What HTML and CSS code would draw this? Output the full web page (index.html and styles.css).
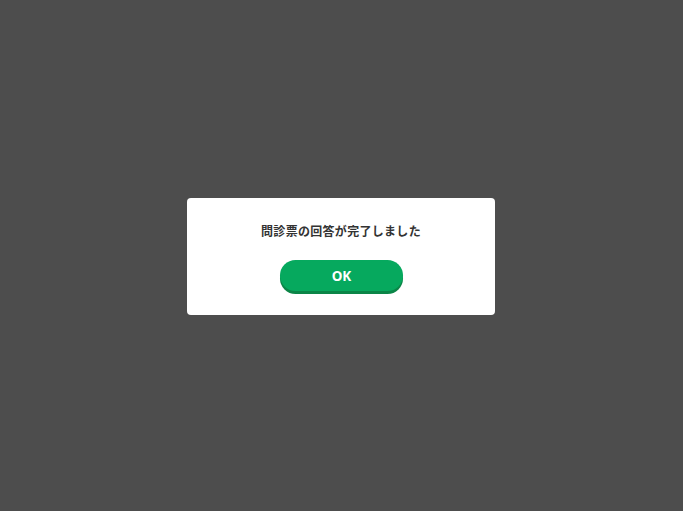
FILE: index.html
```html
<!DOCTYPE html>
<html lang="ja">
<head>
<meta charset="utf-8">
<link rel="stylesheet" href="styles.css">
</head>
<body>
<div class="overlay">
  <div class="dialog">
    <p class="message">問診票の回答が完了しました</p>
    <button class="ok-btn">OK</button>
  </div>
</div>
</body>
</html>
```
FILE: styles.css
```css
html, body {
  margin: 0;
  padding: 0;
  height: 100%;
}
body {
  background: #4d4d4d;
  font-family: "Noto Sans CJK JP", "Noto Sans", sans-serif;
}
.overlay {
  height: 100%;
  display: flex;
  align-items: center;
  justify-content: center;
}
.dialog {
  width: 308px;
  height: 117px;
  box-sizing: border-box;
  background: #ffffff;
  border-radius: 4px;
  display: flex;
  flex-direction: column;
  align-items: center;
  padding-top: 24px;
  margin-top: 2px;
  margin-right: 1px;
}
.message {
  margin: 0;
  font-size: 12px;
  line-height: 18px;
  font-weight: 700;
  color: #333333;
  letter-spacing: 0.3px;
}
.ok-btn {
  margin-top: 20px;
  width: 123px;
  height: 31px;
  border: none;
  border-radius: 16px;
  background: #06a95e;
  box-shadow: 0 3px 0 #0b8547;
  color: #ffffff;
  font-family: "Noto Sans", "Noto Sans CJK JP", sans-serif;
  font-weight: 700;
  font-size: 13.5px;
  padding: 0;
  margin-left: 1px;
}
```
